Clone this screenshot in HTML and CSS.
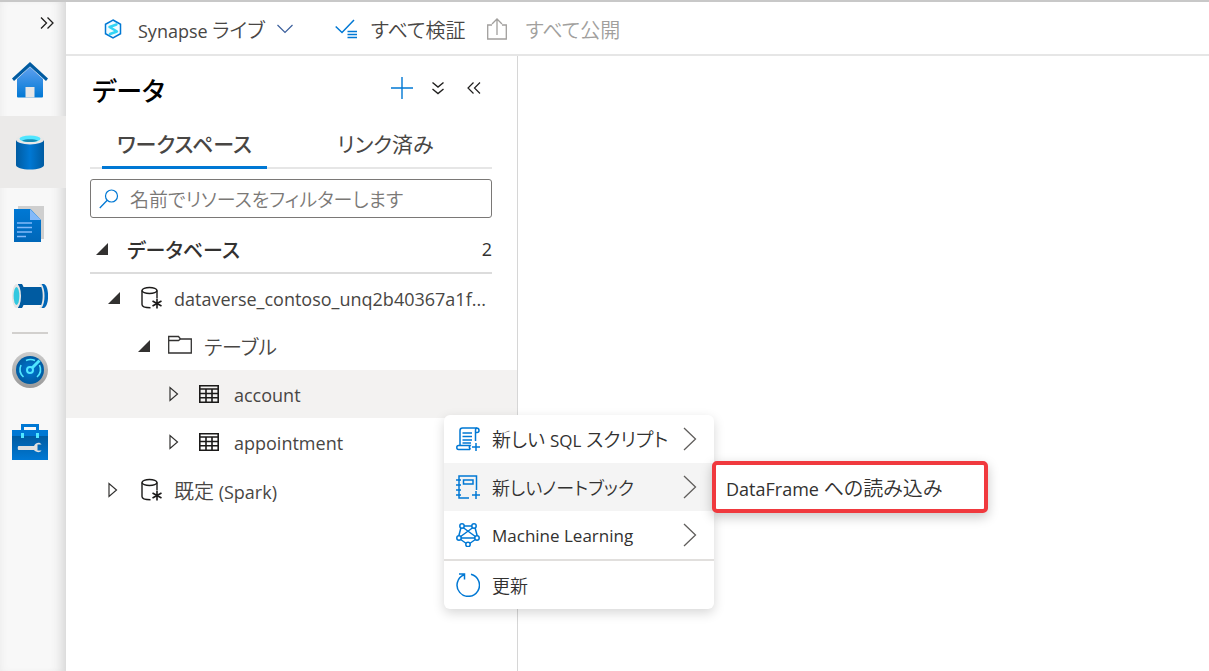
FILE: index.html
```html
<!DOCTYPE html>
<html lang="ja">
<head>
<meta charset="utf-8">
<title>Synapse</title>
<link rel="stylesheet" href="styles.css">
</head>
<body>
<svg class="defs" aria-hidden="true">
  <defs>
    <linearGradient id="home-body" x1="0" y1="0" x2="0" y2="1"><stop offset="0" stop-color="#5ea0ef"/><stop offset="1" stop-color="#0078d4"/></linearGradient>
    <linearGradient id="tank" x1="0" x2="1"><stop offset="0" stop-color="#005ba1"/><stop offset=".5" stop-color="#0078d4"/><stop offset="1" stop-color="#005ba1"/></linearGradient>
    <linearGradient id="rim" x1="0" y1="0" x2="0" y2="1"><stop offset="0" stop-color="#cccccc"/><stop offset="1" stop-color="#999999"/></linearGradient>
    <linearGradient id="box" x1="0" y1="0" x2="0" y2="1"><stop offset="0" stop-color="#005ba1"/><stop offset="1" stop-color="#0078d4"/></linearGradient>
    <linearGradient id="sheet" x1="0" y1="0" x2="0" y2="1"><stop offset="0" stop-color="#0078d4"/><stop offset="1" stop-color="#0067b8"/></linearGradient>
    <radialGradient id="dial"><stop offset="0" stop-color="#0078d4"/><stop offset="1" stop-color="#005ba1"/></radialGradient>
    <symbol id="db" viewBox="0 0 24 24"><g fill="none" stroke="#1b1a19" stroke-width="1.4"><ellipse cx="9.500" cy="4.500" rx="7.500" ry="3"/><path d="M2 4.500v14c0 1.800 3 3.200 8.500 3.200M17 4.500V12"/><path d="M17 12.500v10M12.500 15l9 5M21.500 15l-9 5" stroke-width="1.600"/></g></symbol>
    <symbol id="grid" viewBox="0 0 20 18"><path d="M.8.8h18.400v16.400H.8zM.8 4h18.400M.8 8.500h18.400M.8 12.800h18.400M7 4v13M13 4v13" fill="none" stroke="#1b1a19" stroke-width="1.600"/></symbol>
    <symbol id="open" viewBox="0 0 12 12"><path d="M12 0v12H0z" fill="#323130"/></symbol>
    <symbol id="closed" viewBox="0 0 10 16"><path d="M1 1.500v13L8.500 8z" fill="none" stroke="#323130" stroke-width="1.200"/></symbol>
    <symbol id="next" viewBox="0 0 14 24"><path d="M1 1l11.500 11L1 23" fill="none" stroke="#605e5c" stroke-width="1.300"/></symbol>
  </defs>
</svg>
<div class="app">
  <nav class="rail" aria-label="ハブ">
    <button class="rail-toggle" aria-label="展開"><svg width="14" height="12" viewBox="0 0 14 12"><path d="M1 .5L6.500 6 1 11.500M7.500.5L13 6l-5.500 5.500" fill="none" stroke="#201f1e" stroke-width="1.300"/></svg></button>
    <button class="rail-item" aria-label="ホーム"><svg width="36" height="36" viewBox="0 0 36 36"><path d="M5 17L18 5l13 12v17.500a1 1 0 0 1-1 1H6a1 1 0 0 1-1-1z" fill="url(#home-body)"/><path d="M13.500 25h9v10.500h-9z" fill="#e6e6e6"/><path d="M18 0l18 16.500-2 2.500L18 4.500 2 19l-2-2.500z" fill="#005ba1"/></svg></button>
    <button class="rail-item selected" aria-label="データ"><svg width="36" height="36" viewBox="0 0 36 36"><path d="M4 6v25c0 2.500 6 4.500 14 4.500s14-2 14-4.500V6z" fill="url(#tank)"/><ellipse cx="18" cy="5.500" rx="14" ry="5" fill="#e8e8e8"/><ellipse cx="18" cy="4.800" rx="10.500" ry="3.300" fill="#50e6ff"/><path d="M10 6.700c4-1.800 12-1.800 16 0-4 1.800-12 1.800-16 0z" fill="#198ab3"/></svg></button>
    <button class="rail-item" aria-label="開発"><svg width="36" height="36" viewBox="0 0 36 36"><path d="M6 0h26v33H6z" fill="#cfcfcf"/><path d="M2 3h16.500L29 14v22H2z" fill="url(#sheet)"/><path d="M18 3l11 11H18z" fill="#83b9f9"/><path d="M5 17h15M5 21.500h15M5 26h15M5 30.500h9" stroke="#83b9f9" stroke-width="1.600"/></svg></button>
    <button class="rail-item" aria-label="統合"><svg width="36" height="36" viewBox="0 0 36 36"><path d="M7 9h24v18H7z" fill="#005ba1"/><path d="M6 6h4c3.500 4 3.500 20 0 24H6z" fill="#005ba1"/><ellipse cx="4.500" cy="18" rx="4.500" ry="12" fill="#e6e6e6"/><ellipse cx="4.500" cy="18" rx="2.900" ry="9" fill="#32c8e0"/><path d="M27 6c5 3 5 21 0 24h3c4-5 4-19 0-24z" fill="#e6e6e6"/><path d="M29.500 6H32c5.500 2 5.500 22 0 24h-2.500c4-5 4-19 0-24z" fill="#0067b8"/></svg></button>
    <hr class="rail-line">
    <button class="rail-item" aria-label="監視"><svg width="36" height="36" viewBox="0 0 36 36"><circle cx="18" cy="18" r="18" fill="url(#rim)"/><circle cx="18" cy="18" r="14" fill="url(#dial)"/><path d="M11.500 25A10.500 10.500 0 0 1 9 13M14 8.500A10.500 10.500 0 0 1 23 8.500M27.500 13a10.500 10.500 0 0 1-2.500 12" fill="none" stroke="#50e6ff" stroke-width="1.600"/><circle cx="18" cy="18" r="3" fill="none" stroke="#50e6ff" stroke-width="2"/><path d="M20 16l7.500-7.500" stroke="#50e6ff" stroke-width="3"/></svg></button>
    <button class="rail-item" aria-label="管理"><svg width="36" height="36" viewBox="0 0 36 36"><path d="M10.500 7V1.500h15V7" fill="none" stroke="#0078d4" stroke-width="3"/><path d="M0 6h36v6H0z" fill="#0078d4"/><path d="M0 12h36v24H0z" fill="url(#box)"/><path d="M9 9h3v5H9zM24 9h3v5h-3z" fill="#50e6ff"/><path d="M6.500 22H22c2-4 6-4 7.500-1.500h-4v6h4c-1.500 2.500-5.500 2-7.500-.5H6.500c-1 0-1-4 0-4z" fill="#e0e0e0"/></svg></button>
  </nav>
  <div class="workspace">
    <header class="toolbar">
      <button class="tool mode"><svg width="18" height="20" viewBox="0 0 18 20"><path d="M9 1l7.500 4.300v9.400L9 19l-7.500-4.300V5.300z" fill="#f0fbff" stroke="#0078d4" stroke-width="1.500"/><path d="M12.500 5.500L5.500 8l7.500 4.500L6 15" fill="none" stroke="#32d4f5" stroke-width="2.400" stroke-linecap="round" stroke-linejoin="round"/></svg><span class="caption">Synapse <span class="ja">ライブ</span></span><svg class="chevron" width="16" height="10" viewBox="0 0 16 10"><path d="M.5 1l7.500 7.500L15.500 1" fill="none" stroke="#3b5f9c" stroke-width="1.200"/></svg></button>
      <button class="tool validate"><svg width="22" height="20" viewBox="0 0 22 20"><path d="M.7 7.500l6.300 6L19 1M12.500 12.500H22M12.500 15.500H22M12.500 18.500H22" fill="none" stroke="#0078d4" stroke-width="1.500"/></svg><span class="caption ja">すべて検証</span></button>
      <button class="tool publish" disabled><svg width="20" height="22" viewBox="0 0 20 22"><path d="M5 7H.7v14h18.600V7H15M10 17V1M5 6l5-5 5 5" fill="none" stroke="#a19f9d" stroke-width="1.300"/></svg><span class="caption ja">すべて公開</span></button>
    </header>
    <div class="body">
      <aside class="panel">
        <div class="panel-head">
          <h1 class="title">データ</h1>
          <div class="actions">
            <button aria-label="追加"><svg width="22" height="22" viewBox="0 0 22 22"><path d="M11 0v22M0 11h22" stroke="#0078d4" stroke-width="1.400"/></svg></button>
            <button aria-label="すべて折りたたむ"><svg width="12" height="14" viewBox="0 0 12 14"><path d="M.5 1.500L6 6l5.500-4.500M.5 8L6 12.500 11.500 8" fill="none" stroke="#201f1e" stroke-width="1.400"/></svg></button>
            <button aria-label="閉じる"><svg width="14" height="12" viewBox="0 0 14 12"><path d="M6.500.5L1 6l5.500 5.500M13 .5L7.500 6l5.500 5.500" fill="none" stroke="#201f1e" stroke-width="1.200"/></svg></button>
          </div>
        </div>
        <div class="tabs" role="tablist">
          <button class="tab active" role="tab" aria-selected="true">ワークスペース</button>
          <button class="tab" role="tab" aria-selected="false">リンク済み</button>
        </div>
        <label class="search"><svg width="20" height="20" viewBox="0 0 20 20"><circle cx="12.500" cy="7" r="6" fill="none" stroke="#0078d4" stroke-width="1.200"/><path d="M8.200 11.300L.8 19" stroke="#0078d4" stroke-width="1.300"/></svg><input class="search-box" type="text" aria-label="フィルター" placeholder="名前でリソースをフィルターします"></label>
        <div class="section"><svg width="12" height="12"><use href="#open"/></svg><h2 class="section-title">データベース</h2><span class="count">2</span></div>
        <ul class="tree">
          <li class="node level-1"><svg class="arrow" width="12" height="12"><use href="#open"/></svg><svg class="glyph" width="24" height="24"><use href="#db"/></svg><span class="name">dataverse_contoso_unq2b40367a1f...</span></li>
          <li class="node level-2"><svg class="arrow" width="12" height="12"><use href="#open"/></svg><svg class="glyph" width="24" height="22" viewBox="0 0 24 22"><path d="M.7 1.500h9.800l2 2.500h10.800v14H.7zM.7 5.500h9.800l2-1.500" fill="none" stroke="#323130" stroke-width="1.300"/></svg><span class="name ja">テーブル</span></li>
          <li class="node level-3 chosen"><svg class="arrow" width="10" height="16"><use href="#closed"/></svg><svg class="glyph" width="20" height="18"><use href="#grid"/></svg><span class="name">account</span>
            <ul class="menu">
              <li><button class="menu-item"><svg width="24" height="24" viewBox="0 0 24 24"><path d="M4 18V3.500Q4 1 6.500 1H20.500Q23 1 23 3.500Q23 5.500 21 5.500H19.500V14M19.500 5.500V3.500Q19.500 1 21 1M6.500 6H16M6.500 9.500H16M6.500 13H16M6.500 16H15M14 22.500H2.500Q.8 22.500.8 20.500T2.500 18.500H14Q12.500 20.500 14.500 22.500M20 16v8M16 20h8" fill="none" stroke="#0078d4" stroke-width="1.500"/></svg><span class="label mixed">新しい <span class="latin">SQL</span> スクリプト</span><svg width="14" height="24"><use href="#next"/></svg></button></li>
              <li class="menu-row"><button class="menu-item hover"><svg width="24" height="24" viewBox="0 0 24 24"><path d="M13 23H3V1h17.500v14M7.500 5h9.500v4H7.500zM0 5h5M0 10h5M0 15h5M0 20h5M20 16v8M16 20h8" fill="none" stroke="#0078d4" stroke-width="1.500"/></svg><span class="label">新しいノートブック</span><svg width="14" height="24"><use href="#next"/></svg></button>
                <div class="submenu"><button class="submenu-item"><span>DataFrame <span class="ja">への読み込み</span></span></button></div></li>
              <li><button class="menu-item"><svg width="24" height="24" viewBox="0 0 24 24"><g fill="none" stroke="#0078d4" stroke-width="1.500"><path d="M6 3h12M5 4.500L2.500 14M19 4.500L21.500 14M4 15h16M7 4.500L20 14M17 4.500L4 14M4 16l7 5M20 16l-7 5"/></g><g fill="#fff" stroke="#0078d4" stroke-width="1.500"><circle cx="6" cy="3" r="2.200"/><circle cx="18" cy="3" r="2.200"/><circle cx="3" cy="15" r="2.200"/><circle cx="21" cy="15" r="2.200"/><circle cx="12" cy="21.500" r="2.200"/></g></svg><span class="label latin">Machine Learning</span><svg width="14" height="24"><use href="#next"/></svg></button></li>
              <li class="split"><button class="menu-item"><svg width="24" height="24" viewBox="0 0 24 24"><path d="M15 1.300A11.200 11.200 0 1 1 8 1.800M3 1h5.500v5.500" fill="none" stroke="#0078d4" stroke-width="1.500"/></svg><span class="label">更新</span></button></li>
            </ul>
          </li>
          <li class="node level-3"><svg class="arrow" width="10" height="16"><use href="#closed"/></svg><svg class="glyph" width="20" height="18"><use href="#grid"/></svg><span class="name">appointment</span></li>
          <li class="node level-1 folded"><svg class="arrow" width="10" height="16"><use href="#closed"/></svg><svg class="glyph" width="24" height="24"><use href="#db"/></svg><span class="name"><span class="ja">既定</span> (Spark)</span></li>
        </ul>
      </aside>
      <main class="canvas"></main>
    </div>
  </div>
</div>
</body>
</html>
```
FILE: styles.css
```css
* { box-sizing: border-box; }
body {
  margin: 0;
  font: 18px/24px "Open Sans", "Noto Sans CJK JP", sans-serif;
  font-feature-settings: "palt";
  color: #484644;
  background: #fff;
}
button { padding: 0; border: 0; background: none; font: inherit; font-feature-settings: inherit; color: inherit; }
svg { display: block; flex: none; }
ul { margin: 0; padding: 0; list-style: none; }
.defs { position: absolute; width: 0; height: 0; }
.ja { font-size: 20px; font-weight: 350; }

.app { display: flex; min-height: 100vh; border-top: 2px solid #c8c8c8; }
.rail {
  flex: none;
  width: 66px;
  background: #f8f8f8;
  box-shadow: inset -14px 0 12px -10px #d4d4d4, inset 4px 0 8px -4px #e8e8e8;
}
.rail-toggle { display: flex; justify-content: flex-end; align-items: center; width: 100%; height: 42px; padding-right: 12px; }
.rail-item { display: flex; align-items: center; width: 100%; height: 72px; padding-left: 12px; }
.rail-item.selected { background: #ebeae9; }
.rail-line { width: 36px; height: 2px; margin: 0 0 0 12px; border: 0; background: #d2d0ce; }

.workspace { flex: 1; min-width: 0; display: flex; flex-direction: column; }
.toolbar { display: flex; align-items: center; height: 54px; padding: 2px 0 0 38px; border-bottom: 2px solid #e6e6e6; }
.tool { display: flex; align-items: center; white-space: nowrap; }
.caption { padding-top: 4px; }
.mode { gap: 16px; }
.mode .chevron { margin-left: -4px; }
.validate { gap: 14px; margin-left: 42px; }
.publish { gap: 18px; margin-left: 22px; color: #a19f9d; }

.body { flex: 1; display: flex; }
.panel { flex: none; width: 452px; border-right: 1px solid #d6d6d6; }
.canvas { flex: 1; }
.panel-head { display: flex; justify-content: space-between; align-items: center; height: 64px; padding: 4px 36px 0 26px; }
.title { margin: 0; padding-top: 2px; font-size: 26px; line-height: 32px; font-weight: 500; color: #000; }
.actions { display: flex; align-items: center; gap: 19px; padding-bottom: 4px; }
.actions button:last-child { margin-left: 4px; }
.tabs { display: flex; gap: 36px; height: 49px; margin: 0 25px 0 24px; padding: 0 12px; border-bottom: 2px solid #e6e6e6; }
.tab { width: 165px; height: 49px; padding-top: 2px; border-bottom: 3px solid transparent; font-size: 21px; }
.tab.active { border-color: #0078d4; font-weight: 500; }
.search { display: flex; align-items: center; gap: 11px; height: 39px; margin: 10px 25px 0 24px; padding: 0 8px; border: 1px solid #7a7876; border-radius: 3px; }
.search-box { flex: 1; min-width: 0; padding: 2px 0 0; border: 0; outline: 0; background: none; font: inherit; font-size: 19px; font-weight: 350; font-feature-settings: inherit; }
.search-box::placeholder { color: #7a7876; opacity: 1; }
.section { display: flex; align-items: center; gap: 19px; height: 48px; margin: 8px 25px 0 24px; padding-left: 6px; border-bottom: 2px solid #dcdcdc; color: #323130; }
.section-title { flex: 1; margin: 0; padding-top: 3px; font-size: 20px; font-weight: 500; }

.node { position: relative; display: flex; align-items: center; height: 48px; }
.name { padding-top: 2px; white-space: nowrap; }
.arrow { margin-right: 20px; }
.glyph { margin-right: 10px; }
.level-1 { padding-left: 42px; }
.level-2 { padding-left: 72px; }
.level-3 { padding-left: 103px; }
.level-2 .arrow { margin-right: 18px; }
.level-2 .glyph { margin-right: 12px; }
.level-2 .name { padding-top: 4px; }
.level-3 .glyph { margin-right: 15px; }
.folded .arrow { margin-right: 22px; }
.folded .name { padding-top: 4px; }
.chosen { background: #f3f2f1; }

.menu { position: absolute; z-index: 1; left: 378px; top: 45px; width: 270px; border-radius: 6px; background: #fff; box-shadow: 0 4px 12px rgba(0, 0, 0, .16); color: #323130; }
.menu-row { position: relative; }
.menu-item { display: flex; align-items: center; gap: 12px; width: 100%; height: 48px; padding: 0 17px 0 12px; text-align: left; }
.menu-item.hover { background: #f4f4f4; }
.label { flex: 1; padding-top: 2px; font-weight: 350; white-space: nowrap; }
.label.mixed { font-size: 19px; }
.latin { font-size: 17px; font-weight: 400; }
.split { border-top: 2px solid #e1dfdd; }
.submenu { position: absolute; left: 268px; top: -2px; width: 276px; border: 4px solid #f0393e; border-radius: 5px; background: #fff; box-shadow: 0 4px 12px rgba(0, 0, 0, .22); }
.submenu-item { width: 100%; height: 44px; padding: 4px 10px 0; text-align: left; white-space: nowrap; }
```
